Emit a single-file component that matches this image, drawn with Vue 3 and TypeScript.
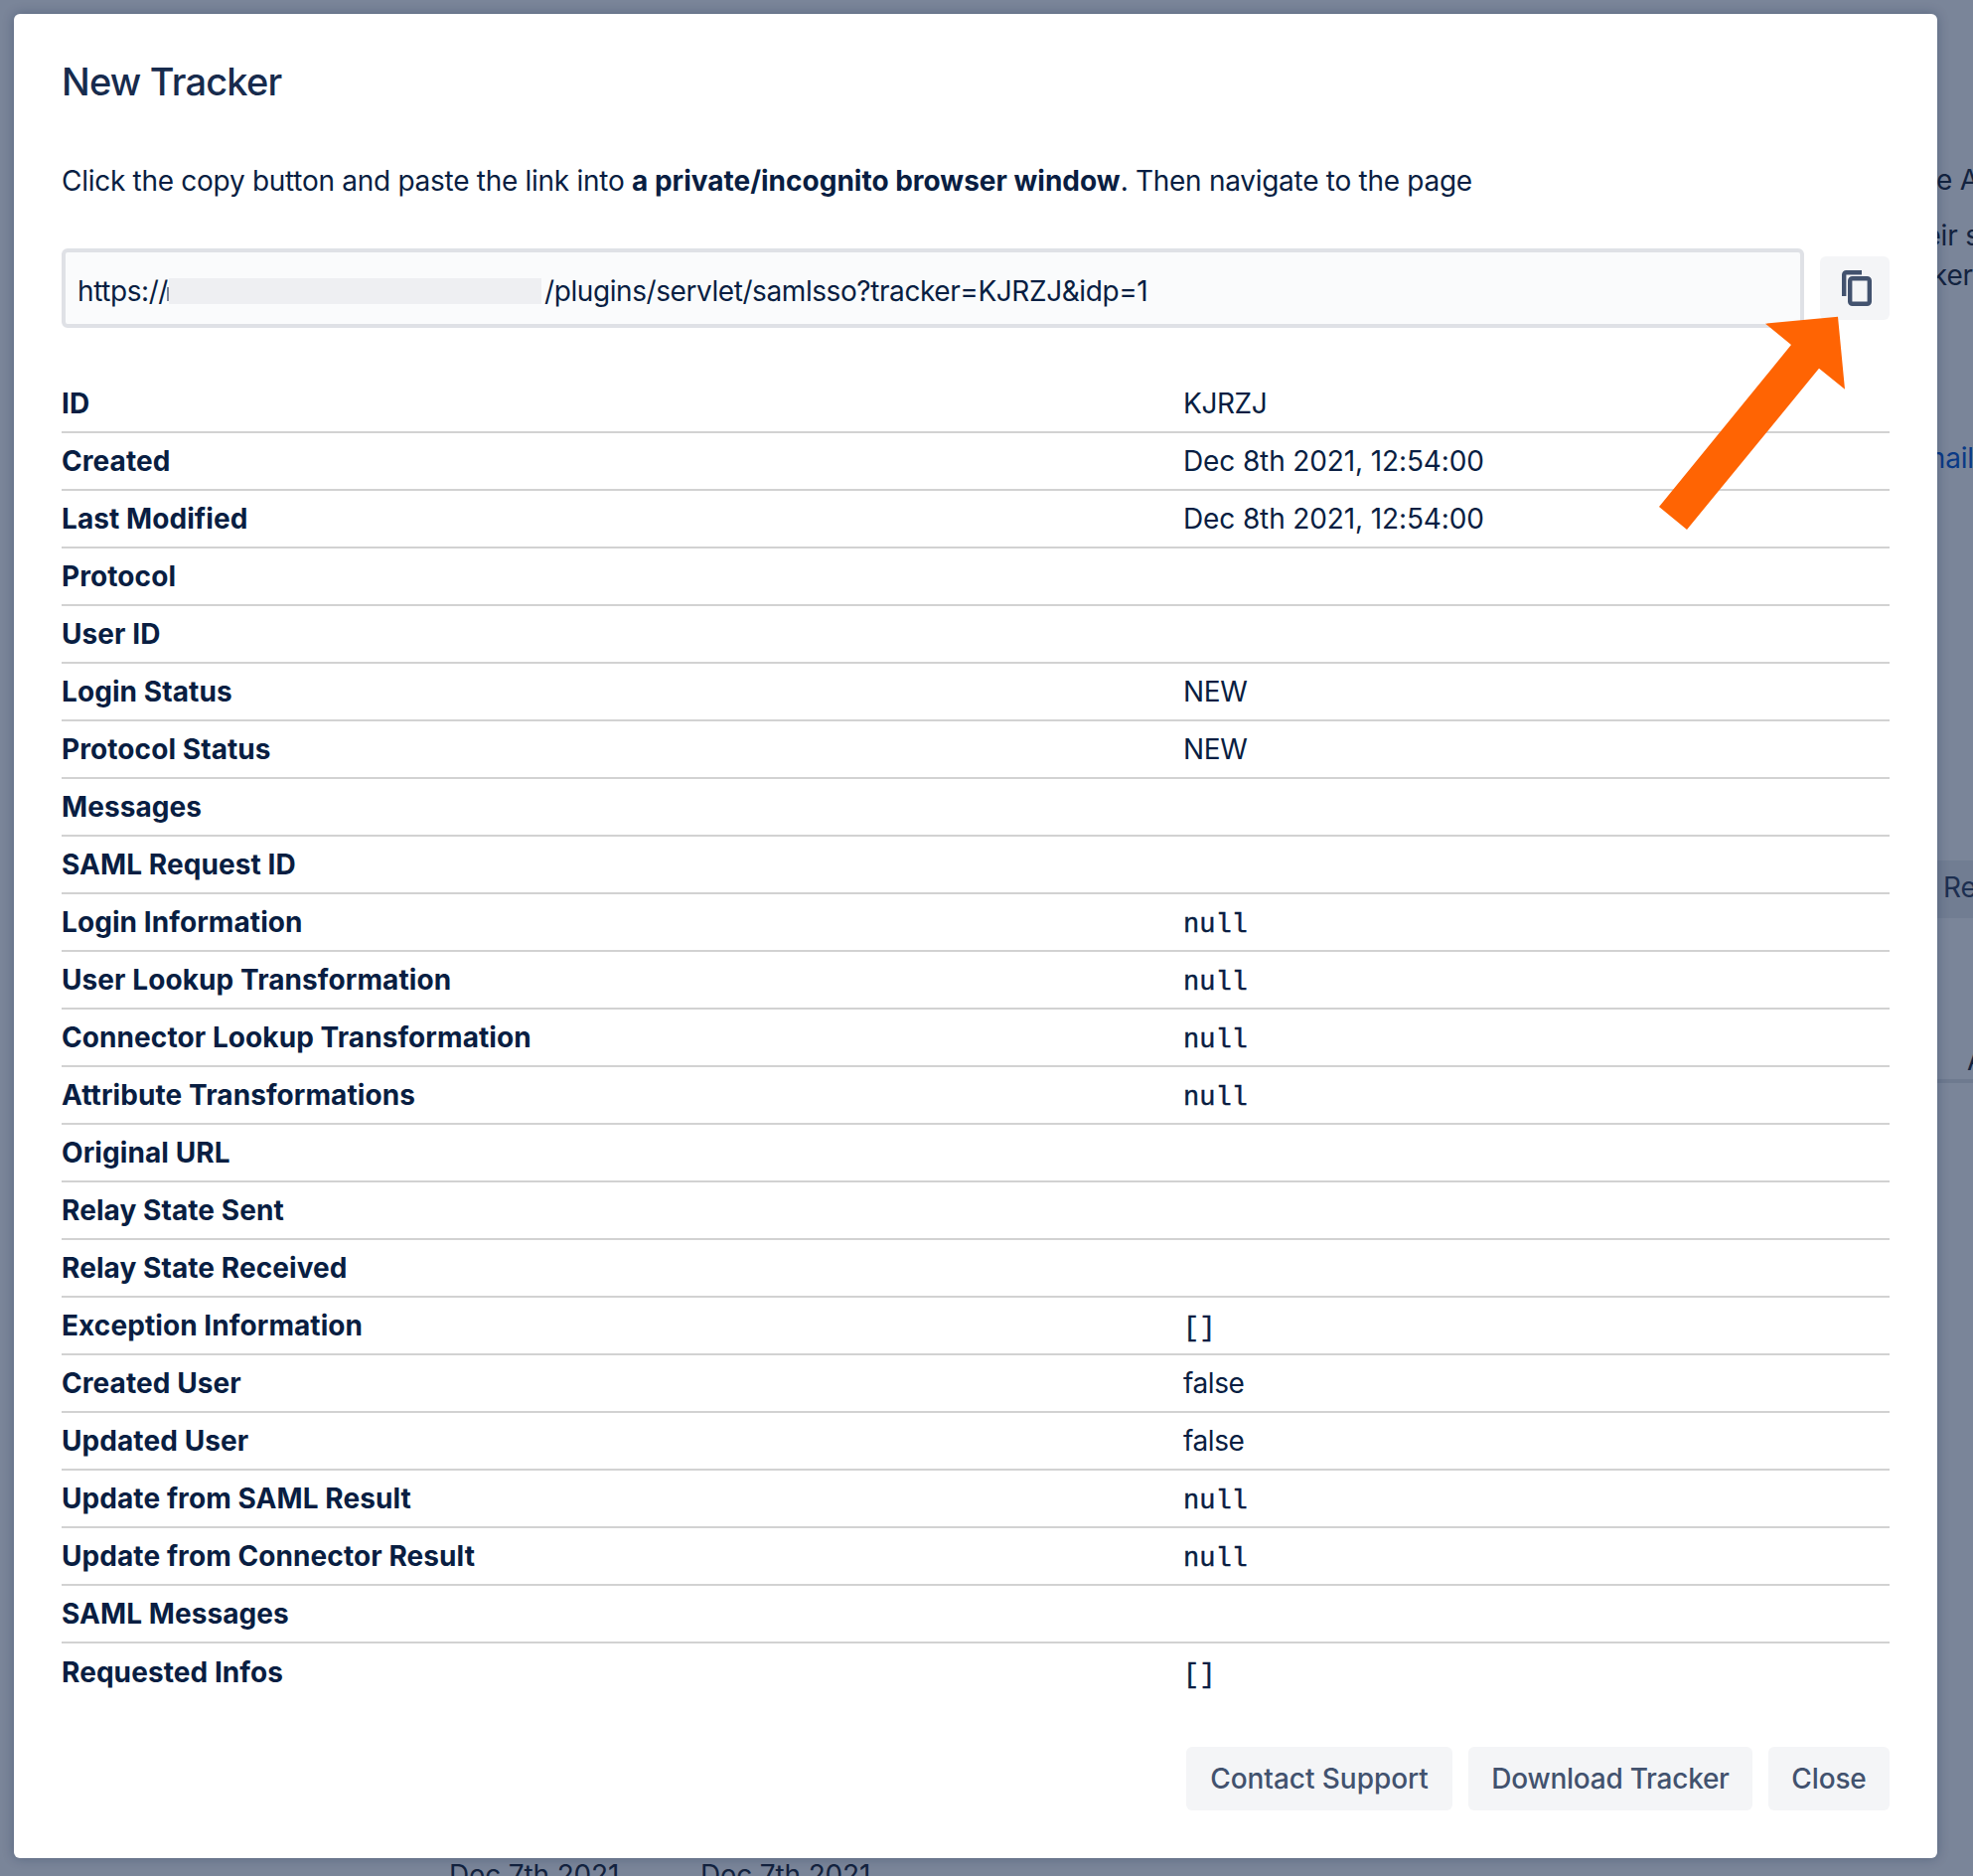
<script setup lang="ts">
interface Row {
  label: string
  value?: string
  mono?: boolean
  date?: boolean
}

const rows: Row[] = [
  { label: 'ID', value: 'KJRZJ' },
  { label: 'Created', value: 'Dec 8th 2021, 12:54:00', date: true },
  { label: 'Last Modified', value: 'Dec 8th 2021, 12:54:00', date: true },
  { label: 'Protocol' },
  { label: 'User ID' },
  { label: 'Login Status', value: 'NEW' },
  { label: 'Protocol Status', value: 'NEW' },
  { label: 'Messages' },
  { label: 'SAML Request ID' },
  { label: 'Login Information', value: 'null', mono: true },
  { label: 'User Lookup Transformation', value: 'null', mono: true },
  { label: 'Connector Lookup Transformation', value: 'null', mono: true },
  { label: 'Attribute Transformations', value: 'null', mono: true },
  { label: 'Original URL' },
  { label: 'Relay State Sent' },
  { label: 'Relay State Received' },
  { label: 'Exception Information', value: '[]', mono: true },
  { label: 'Created User', value: 'false' },
  { label: 'Updated User', value: 'false' },
  { label: 'Update from SAML Result', value: 'null', mono: true },
  { label: 'Update from Connector Result', value: 'null', mono: true },
  { label: 'SAML Messages' },
  { label: 'Requested Infos', value: '[]', mono: true },
]

const behind = [
  { text: 'the A', cls: 'b1' },
  { text: 'their s', cls: 'b2' },
  { text: 'tracker', cls: 'b3' },
  { text: 'email', cls: 'b4' },
  { text: 'Re', cls: 'b5' },
  { text: 'A', cls: 'b6' },
  { text: 'Dec 7th 2021', cls: 'b7' },
  { text: 'Dec 7th 2021', cls: 'b8' },
]
</script>

<template>
  <div class="stage">
    <span v-for="b in behind" :key="b.cls" class="behind" :class="b.cls">{{ b.text }}</span>
    <div class="behind-band"></div>
    <div class="behind-rule"></div>

    <section class="modal">
      <h1 class="title">New Tracker</h1>
      <p class="intro">
        Click the copy button and paste the link into
        <strong>a private/incognito browser window</strong>. Then navigate to the page
      </p>

      <div class="link-row">
        <div class="link-field">
          <span class="scheme">https://</span><span class="redacted"></span><span>/plugins/servlet/samlsso?tracker=KJRZJ&amp;idp=1</span>
        </div>
        <button class="copy" type="button" aria-label="Copy">
          <svg width="30" height="36" viewBox="0 0 30 36" fill="none" stroke="#42526e" stroke-width="4.4">
            <path d="M2.2 26V4.4a2.2 2.2 0 0 1 2.2-2.2H20" />
            <rect x="8.2" y="8.2" width="19.6" height="25.6" rx="2.4" />
          </svg>
        </button>
      </div>

      <div class="table">
        <div v-for="r in rows" :key="r.label" class="row">
          <div class="label">{{ r.label }}</div>
          <div class="value" :class="{ mono: r.mono, date: r.date }">{{ r.value }}</div>
        </div>
      </div>

      <footer class="actions">
        <button class="btn btn-contact" type="button">Contact Support</button>
        <button class="btn btn-download" type="button">Download Tracker</button>
        <button class="btn btn-close" type="button">Close</button>
      </footer>
    </section>

    <svg class="arrow" width="200" height="230" viewBox="0 0 200 230">
      <polygon points="190,8.7 197,81.7 171,60.7 38,223 10,200 143,37 117,15.7" fill="#ff6403" />
    </svg>
  </div>
</template>

<style>
html,
body {
  margin: 0;
  background: #7a8599;
}
</style>

<style scoped>
.stage {
  position: relative;
  width: 1986px;
  height: 1888px;
  overflow: hidden;
  box-sizing: border-box;
  padding: 14px 36px 18px 14px;
  background: #7a8599;
  font-family: Inter, "Liberation Sans", sans-serif;
  color: #172b4d;
}

.behind {
  position: absolute;
  font-size: 28px;
  line-height: 34px;
  letter-spacing: -0.15px;
  color: #13233f;
  white-space: nowrap;
}
.b1 { right: -6px; top: 164px; }
.b2 { right: -7px; top: 220px; }
.b3 { right: 0; top: 260px; }
.b4 { right: -1px; top: 444px; color: #0a3a86; }
.b5 { left: 1956px; top: 876px; color: #1d2f50; z-index: 1; }
.b6 { left: 1980px; top: 1050px; }
.b7 { left: 452px; top: 1870px; }
.b8 { left: 705px; top: 1870px; }

.behind-band {
  position: absolute;
  left: 1950px;
  top: 866px;
  width: 36px;
  height: 58px;
  background: #717d92;
}
.behind-rule {
  position: absolute;
  left: 1950px;
  top: 1086px;
  width: 36px;
  height: 4px;
  background: #6e7a8f;
}

.modal {
  position: relative;
  z-index: 2;
  box-sizing: border-box;
  width: 1936px;
  height: 1856px;
  padding: 48px 48px 48px;
  background: #fff;
  border-radius: 6px;
  box-shadow: 0 0 12px rgba(9, 30, 66, 0.3);
  display: flex;
  flex-direction: column;
}

.title {
  margin: 0;
  font-size: 38px;
  font-weight: 500;
  line-height: 40px;
  letter-spacing: -0.8px;
  color: #172b4d;
}

.intro {
  margin: 60px 0 0;
  font-size: 28px;
  line-height: 40px;
  letter-spacing: -0.28px;
  color: #091e42;
}
.intro strong {
  font-weight: 700;
  letter-spacing: 0;
}

.link-row {
  display: flex;
  align-items: center;
  gap: 16px;
  margin-top: 48px;
}

.link-field {
  flex: 1;
  box-sizing: border-box;
  height: 80px;
  display: flex;
  align-items: center;
  padding: 5px 0 0 12px;
  border: 4px solid #dfe1e6;
  border-radius: 6px;
  background: #fafbfc;
  font-size: 28px;
  letter-spacing: -0.42px;
  color: #091e42;
  white-space: nowrap;
}

.scheme {
  width: 92px;
}

.redacted {
  position: relative;
  width: 375px;
  height: 26px;
  margin-right: 3px;
  background: #eeeff2;
}
.redacted::before {
  content: "";
  position: absolute;
  left: -2px;
  top: 9px;
  width: 2px;
  height: 14px;
  background: #7a8598;
}

.copy {
  width: 70px;
  height: 64px;
  padding: 0 0 0 3px;
  border: 0;
  border-radius: 6px;
  background: #f4f5f7;
  display: flex;
  align-items: center;
  justify-content: center;
}

.table {
  margin-top: 48px;
}

.row {
  display: grid;
  grid-template-columns: 1129px 1fr;
  height: 58px;
  box-sizing: border-box;
  align-items: center;
  border-bottom: 2px solid #d2d2d2;
  font-size: 28px;
  line-height: 36px;
  color: #091e42;
}
.row:last-child {
  border-bottom: 0;
}

.label {
  font-weight: 700;
  letter-spacing: 0.08px;
}

.value {
  letter-spacing: -0.4px;
}

.value.date {
  letter-spacing: -0.12px;
}

.value.mono {
  font-family: "Liberation Mono", monospace;
  font-size: 27px;
  letter-spacing: 0;
  padding-top: 5px;
  -webkit-text-stroke: 0.4px #091e42;
}

.actions {
  display: flex;
  justify-content: flex-end;
  gap: 16px;
  margin-top: auto;
}

.btn {
  height: 64px;
  padding: 0;
  border: 0;
  border-radius: 6px;
  background: #f4f5f7;
  color: #42526e;
  font-family: inherit;
  font-size: 28px;
  font-weight: 500;
}
.btn-contact {
  width: 268px;
  letter-spacing: -0.05px;
}
.btn-download {
  width: 286px;
  letter-spacing: -0.25px;
}
.btn-close {
  width: 122px;
  letter-spacing: -0.15px;
}

.arrow {
  position: absolute;
  left: 1660px;
  top: 310px;
  z-index: 3;
}
</style>
